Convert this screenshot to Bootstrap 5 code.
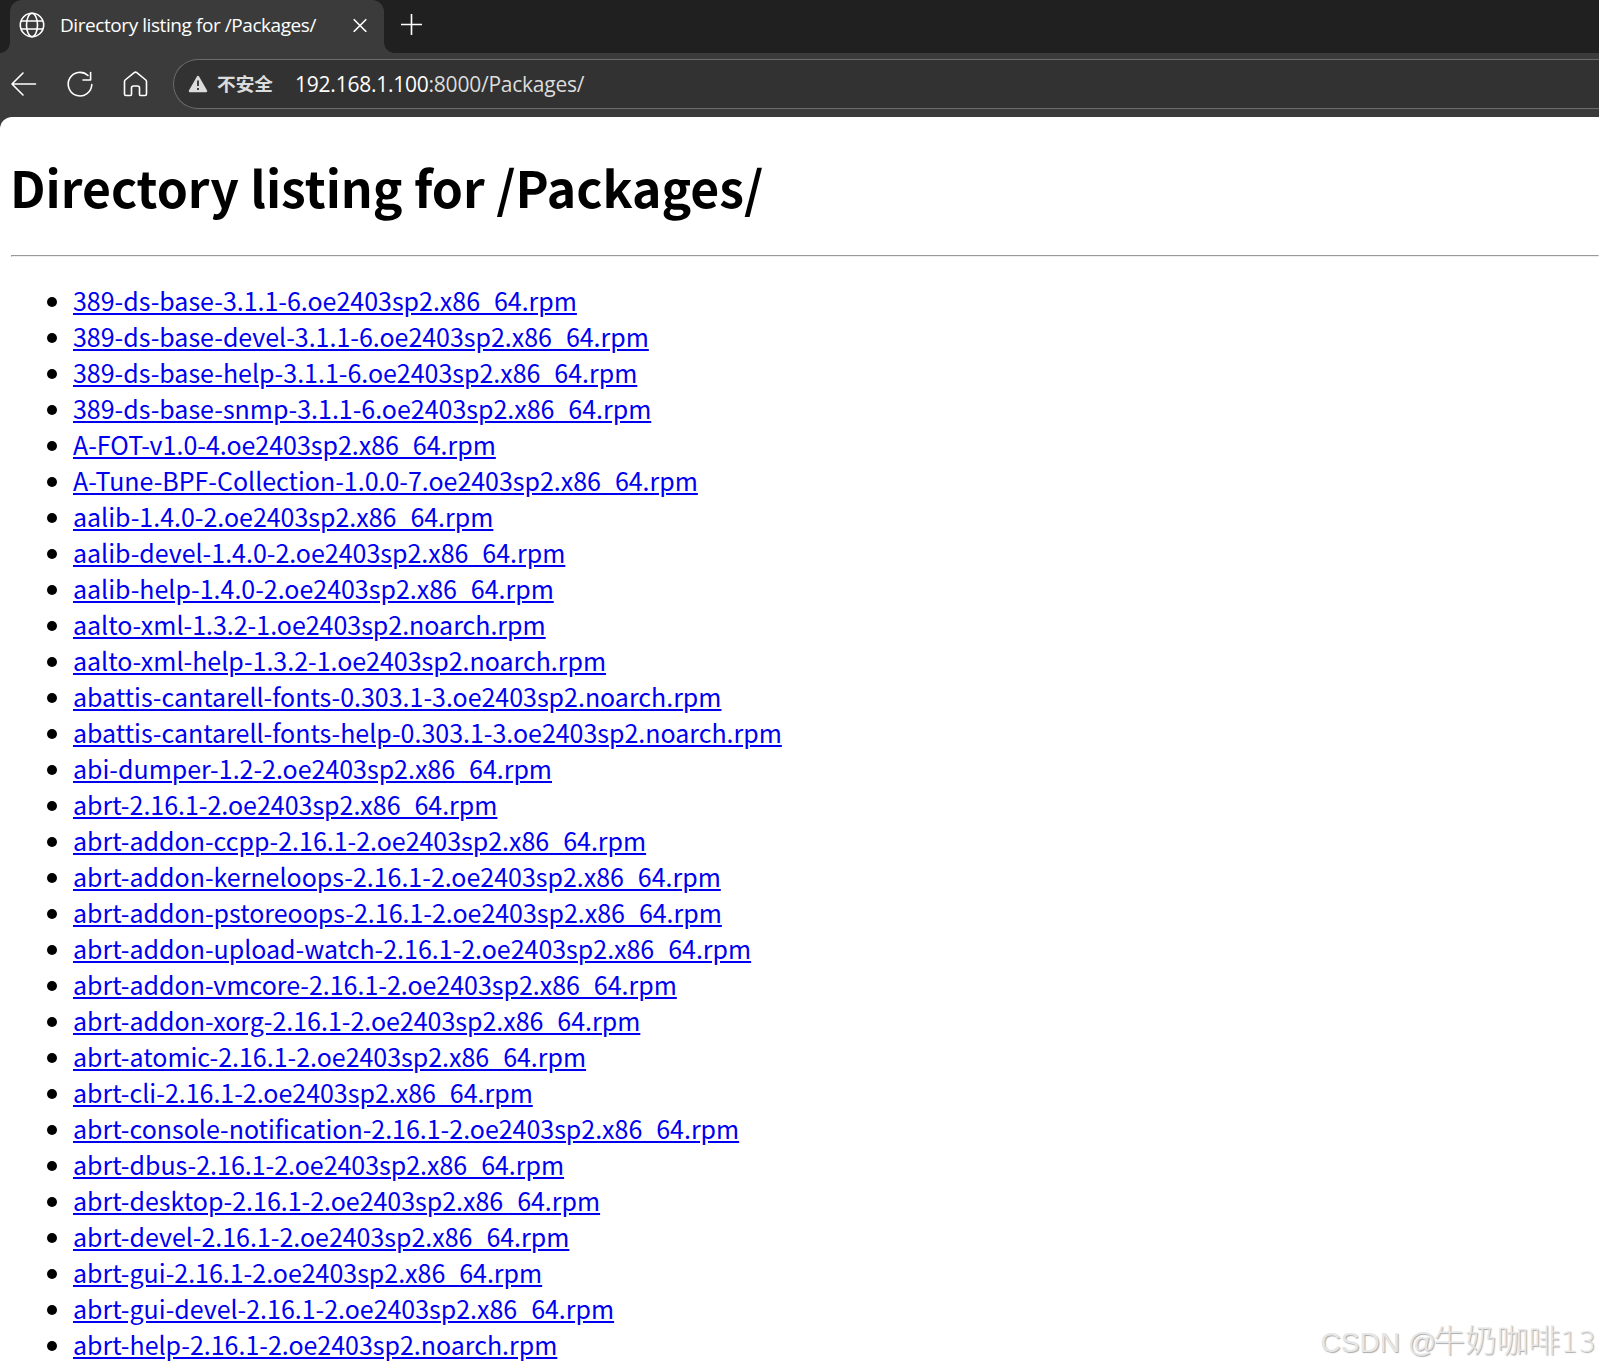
<!DOCTYPE html>
<html lang="zh-CN">
<head>
    <meta charset="UTF-8" />
    <meta name="viewport" content="width=device-width, initial-scale=1" />
    <title>Directory listing for /Packages/</title>
    <link href="https://cdn.jsdelivr.net/npm/bootstrap@5.3.0/dist/css/bootstrap.min.css" rel="stylesheet" />

    <style>
    body {
        height: 1370px;
        background-color: #3b3b3b;
        font-family: "Noto Sans CJK SC", sans-serif;
    }

    svg {
        display: block;
        flex: none;
        fill: none;
        stroke: #fff;
        stroke-width: 1.6;
    }

    /* 标签栏 */
    .tab-strip {
        height: 53px;
        background-color: #202020;
        padding-left: 10px;
    }

    .browser-tab {
        position: relative;
        width: 374px;
        background-color: #3b3b3b;
        border-radius: 12px 12px 0 0;
        padding: 0 17px 3px 9px;
        color: #fff;
    }

    .browser-tab::before,
    .browser-tab::after {
        content: "";
        position: absolute;
        bottom: 0;
        width: 10px;
        height: 10px;
    }

    .browser-tab::before {
        left: -10px;
        background: radial-gradient(circle at 0 0, #202020 9.5px, #3b3b3b 10px);
    }

    .browser-tab::after {
        right: -10px;
        background: radial-gradient(circle at 100% 0, #202020 9.5px, #3b3b3b 10px);
    }

    .tab-title {
        margin-left: 15px;
        padding-bottom: 1px;
        font: 19px/24px "Open Sans", sans-serif;
        letter-spacing: -0.43px;
        white-space: nowrap;
    }

    .new-tab {
        margin-left: 16px;
        padding-bottom: 4px;
    }

    /* 地址栏 */
    .toolbar {
        height: 64px;
        padding: 0 0 3px 10px;
    }

    .address-bar {
        height: 50px;
        margin-left: 25px;
        padding-left: 14px;
        background-color: #323232;
        border: 1px solid #6b6b6b;
        border-right: 0;
        border-radius: 25px 0 0 25px;
        color: #dcdcdc;
    }

    .unsafe-label {
        margin-left: 9px;
        padding-bottom: 2px;
        font-size: 18.7px;
        font-weight: 700;
        line-height: 26px;
    }

    .url-text {
        margin-left: 22px;
        font: 21px/28px "Open Sans", sans-serif;
        letter-spacing: -0.24px;
        padding-top: 1px;
    }

    .url-text b {
        font-weight: 400;
        color: #fff;
    }

    /* 页面内容 */
    .page-view {
        position: relative;
        height: 1253px;
        padding-left: 11px;
        background-color: #fff;
        border-radius: 12px 0 0 0;
        color: #000;
        font-size: 24.98px;
    }

    .page-view h1 {
        margin: 0 0 0 -1px;
        padding: 32px 0 4px;
        font-size: 49.88px;
        font-weight: 700;
        line-height: 74px;
    }

    .page-view hr {
        height: 2px;
        margin: 28px 0 25px;
        border: 1px solid;
        border-color: #9a9a9a #eee #eee #9a9a9a;
        opacity: 1;
    }

    .page-view ul {
        margin: 0;
        padding-left: 62px;
        line-height: 36px;
    }

    .page-view a {
        color: #0000ee;
        text-decoration: underline;
    }

    .watermark {
        position: absolute;
        right: 3px;
        bottom: 7px;
        font: 28px/40px "Liberation Sans", "Noto Sans CJK SC", sans-serif;
        color: #e6e6e6;
        text-shadow: 1px 1px 1px #aaa;
        white-space: nowrap;
    }

    .watermark span {
        margin-left: -3px;
        font-family: "Noto Sans CJK SC", sans-serif;
        font-size: 31.8px;
        font-weight: 300;
    }

    .watermark i {
        font-family: "DejaVu Sans", sans-serif;
        font-style: normal;
        font-weight: 200;
    }
    </style>
</head>
<body class="overflow-hidden">
    <div class="tab-strip d-flex">
        <div class="browser-tab d-flex align-items-center">
            <svg width="26" height="26" viewBox="0 0 26 26">
                <circle cx="13" cy="13" r="11.7" />
                <ellipse cx="13" cy="13" rx="5.5" ry="11.7" />
                <path d="M2 9h22M2 17h22" />
            </svg>
            <span class="tab-title">Directory listing for /Packages/</span>
            <svg class="ms-auto" width="14" height="14" viewBox="0 0 14 14">
                <path d="M.7 1.2l12.6 12.6M13.3 1.2L.7 13.8" />
            </svg>
        </div>
        <div class="new-tab d-flex align-items-center">
            <svg width="23" height="23" viewBox="0 0 23 23">
                <path d="M11.5 1v21M1 11.5h21" />
            </svg>
        </div>
    </div>

    <div class="toolbar d-flex align-items-center">
        <svg width="27" height="26" viewBox="0 0 27 26">
            <path d="M13 2L2 13l11 11M2 13h23.5" stroke-linecap="round" stroke-linejoin="round" />
        </svg>
        <svg class="ms-4" width="38" height="28" viewBox="-6 -.5 38 28">
            <path d="M21 5A11.8 11.8 0 1 0 24.8 14M23.6 2v7.5H16" stroke-linecap="round" stroke-linejoin="round" />
        </svg>
        <svg class="ms-4" width="25" height="26" viewBox="-.5 0 25 26">
            <path d="M1 10.5Q1 9.7 1.7 9L11 1.5Q12 .8 13 1.5L22.3 9Q23 9.7 23 10.5V23q0 1.5-1.5 1.5H17q-1 0-1-1V17q0-2-2-2h-4q-2 0-2 2v6.5q0 1-1 1H2.5Q1 24.5 1 23z" />
        </svg>
        <div class="address-bar d-flex align-items-center flex-grow-1">
            <svg width="20" height="18" viewBox="0 0 20 18">
                <path d="M10 2L18 16H2z" fill="#dcdcdc" stroke="#dcdcdc" stroke-width="2.5" stroke-linejoin="round" />
                <path d="M10 5.5v5.5M10 13v2" stroke="#323232" stroke-width="1.8" />
            </svg>
            <span class="unsafe-label">不安全</span>
            <span class="url-text"><b>192.168.1.100</b>:8000/Packages/</span>
        </div>
    </div>

    <div class="page-view">
        <h1>Directory listing for /Packages/</h1>
        <hr />
        <ul>
            <li><a href="#">389-ds-base-3.1.1-6.oe2403sp2.x86_64.rpm</a></li>
            <li><a href="#">389-ds-base-devel-3.1.1-6.oe2403sp2.x86_64.rpm</a></li>
            <li><a href="#">389-ds-base-help-3.1.1-6.oe2403sp2.x86_64.rpm</a></li>
            <li><a href="#">389-ds-base-snmp-3.1.1-6.oe2403sp2.x86_64.rpm</a></li>
            <li><a href="#">A-FOT-v1.0-4.oe2403sp2.x86_64.rpm</a></li>
            <li><a href="#">A-Tune-BPF-Collection-1.0.0-7.oe2403sp2.x86_64.rpm</a></li>
            <li><a href="#">aalib-1.4.0-2.oe2403sp2.x86_64.rpm</a></li>
            <li><a href="#">aalib-devel-1.4.0-2.oe2403sp2.x86_64.rpm</a></li>
            <li><a href="#">aalib-help-1.4.0-2.oe2403sp2.x86_64.rpm</a></li>
            <li><a href="#">aalto-xml-1.3.2-1.oe2403sp2.noarch.rpm</a></li>
            <li><a href="#">aalto-xml-help-1.3.2-1.oe2403sp2.noarch.rpm</a></li>
            <li><a href="#">abattis-cantarell-fonts-0.303.1-3.oe2403sp2.noarch.rpm</a></li>
            <li><a href="#">abattis-cantarell-fonts-help-0.303.1-3.oe2403sp2.noarch.rpm</a></li>
            <li><a href="#">abi-dumper-1.2-2.oe2403sp2.x86_64.rpm</a></li>
            <li><a href="#">abrt-2.16.1-2.oe2403sp2.x86_64.rpm</a></li>
            <li><a href="#">abrt-addon-ccpp-2.16.1-2.oe2403sp2.x86_64.rpm</a></li>
            <li><a href="#">abrt-addon-kerneloops-2.16.1-2.oe2403sp2.x86_64.rpm</a></li>
            <li><a href="#">abrt-addon-pstoreoops-2.16.1-2.oe2403sp2.x86_64.rpm</a></li>
            <li><a href="#">abrt-addon-upload-watch-2.16.1-2.oe2403sp2.x86_64.rpm</a></li>
            <li><a href="#">abrt-addon-vmcore-2.16.1-2.oe2403sp2.x86_64.rpm</a></li>
            <li><a href="#">abrt-addon-xorg-2.16.1-2.oe2403sp2.x86_64.rpm</a></li>
            <li><a href="#">abrt-atomic-2.16.1-2.oe2403sp2.x86_64.rpm</a></li>
            <li><a href="#">abrt-cli-2.16.1-2.oe2403sp2.x86_64.rpm</a></li>
            <li><a href="#">abrt-console-notification-2.16.1-2.oe2403sp2.x86_64.rpm</a></li>
            <li><a href="#">abrt-dbus-2.16.1-2.oe2403sp2.x86_64.rpm</a></li>
            <li><a href="#">abrt-desktop-2.16.1-2.oe2403sp2.x86_64.rpm</a></li>
            <li><a href="#">abrt-devel-2.16.1-2.oe2403sp2.x86_64.rpm</a></li>
            <li><a href="#">abrt-gui-2.16.1-2.oe2403sp2.x86_64.rpm</a></li>
            <li><a href="#">abrt-gui-devel-2.16.1-2.oe2403sp2.x86_64.rpm</a></li>
            <li><a href="#">abrt-help-2.16.1-2.oe2403sp2.noarch.rpm</a></li>
        </ul>
        <div class="watermark">CSDN @<span>牛奶咖啡</span><i>13</i></div>
    </div>

    <script src="https://cdn.jsdelivr.net/npm/bootstrap@5.3.0/dist/js/bootstrap.bundle.min.js"></script>
</body>
</html>
